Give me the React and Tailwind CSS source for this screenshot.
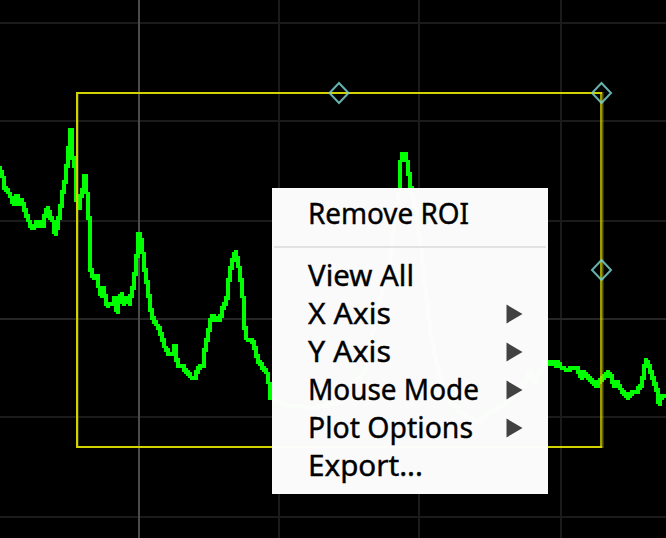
const TRACE =
  '0,168 3,177 5,188 9,193 11,197 13,203 17,196 18,204 22,200 25,210 28,218 31,227 34,227 37,222 39,225 42,221 43,226 46,211 48,208 50,217 53,221 55,233 57,228 60,213 62,198 65,182 68,157 71,129 72,153 75,167 76,197 79,207 81,195 83,190 85,176 87,193 88,212 90,223 90,267 93,277 97,275 99,287 101,295 103,288 107,305 113,303 115,298 117,311 119,302 122,294 124,303 127,297 129,303 132,292 134,282 136,267 139,233 142,243 144,263 147,282 150,302 152,317 155,322 159,328 163,340 165,347 169,354 173,354 175,346 177,360 179,366 182,365 187,372 191,377 195,377 200,365 203,366 205,350 209,330 211,320 213,316 216,320 220,320 223,308 227,298 229,280 232,262 236,252 239,267 242,287 244,307 245,328 247,339 252,340 255,348 258,360 263,368 267,373 269,383 271,398 285,405 312,408 342,402 365,370 375,320 390,260 399,188 400,165 403,153 406,154 408,168 411,187 420,240 430,330 437,365 445,395 460,412 478,422 490,412 510,400 525,382 530,372 535,382 545,361 549,363 553,361 555,365 557,361 561,367 567,370 573,368 577,368 581,377 583,371 587,376 592,381 597,386 600,381 605,376 608,372 611,376 614,386 617,382 622,391 627,397 631,393 637,391 641,385 643,378 646,360 649,366 653,378 657,390 659,403 662,395 666,396';

const POINTS = TRACE.split(' ').map((pair) => pair.split(',').map(Number));

// Rasterise the signal onto a 2px grid, one vertical span per column.
function steppedPath(points) {
  const columns = new Map();
  const mark = (x, y) => {
    const column = Math.round(x / 2) * 2;
    const span = columns.get(column) ?? [y, y];
    columns.set(column, [Math.min(span[0], y), Math.max(span[1], y)]);
  };
  for (let i = 1; i < points.length; i += 1) {
    const [x0, y0] = points[i - 1];
    const [x1, y1] = points[i];
    for (let step = 0; step <= 40; step += 1) {
      const t = step / 40;
      mark(x0 + (x1 - x0) * t, y0 + (y1 - y0) * t);
    }
  }
  return [...columns]
    .map(([x, [low, high]]) => {
      const top = Math.round((low - 2) / 2) * 2;
      const bottom = Math.round((high + 2) / 2) * 2;
      return `M${x - 2} ${top}h4V${bottom}h-4Z`;
    })
    .join('');
}

const TRACE_PATH = steppedPath(POINTS);

const HANDLES = [
  [339, 93],
  [601.5, 93],
  [601.5, 270],
];

const ITEMS = [
  { label: 'View All', width: 106 },
  { label: 'X Axis', width: 83, submenu: true },
  { label: 'Y Axis', width: 83, submenu: true },
  { label: 'Mouse Mode', width: 171, submenu: true },
  { label: 'Plot Options', width: 165, submenu: true },
  { label: 'Export...', width: 115 },
];

function Plot() {
  return (
    <svg className="block" width="666" height="538" viewBox="0 0 666 538" fill="none">
      <g fill="#1b1b1b">
        {[22, 120, 220, 416, 516].map((y) => (
          <rect key={y} x="0" y={y} width="666" height="2" />
        ))}
        {[278, 418, 560].map((x) => (
          <rect key={x} x={x} y="0" width="2" height="538" />
        ))}
        <rect x="0" y="318" width="666" height="2" fill="#262626" />
        <rect x="138" y="0" width="2" height="538" fill="#4b4b4b" />
      </g>
      <path d={TRACE_PATH} fill="#00ff00" shapeRendering="crispEdges" />
      <g fill="#d2d200">
        <rect x="76" y="92" width="526" height="2" />
        <rect x="76" y="446" width="526" height="2" />
        <rect x="76" y="94" width="2" height="352" />
        <rect x="78" y="94" width="1" height="352" fillOpacity="0.25" />
        <rect x="600" y="94" width="2" height="352" fillOpacity="0.75" />
        <rect x="602" y="92" width="1.5" height="356" fillOpacity="0.45" />
      </g>
      {HANDLES.map(([x, y]) => (
        <path
          key={`${x}-${y}`}
          d={`M${x} ${y - 10}L${x + 9.5} ${y}L${x} ${y + 10}L${x - 9.5} ${y}Z`}
          stroke="#78d0cc"
          strokeOpacity="0.85"
          strokeWidth="2"
        />
      ))}
    </svg>
  );
}

function Label({ text, width }) {
  return (
    <svg className="block overflow-visible" width={width} height="38">
      <text
        x="0"
        y="29"
        textLength={width}
        lengthAdjust="spacingAndGlyphs"
        className="fill-black stroke-black font-['Noto_Sans',sans-serif] text-[29px] [stroke-width:0.4px]"
      >
        {text}
      </text>
    </svg>
  );
}

function MenuItem({ label, width, submenu }) {
  return (
    <div className="flex h-[38px] items-center justify-between pl-[36px] pr-[25px]">
      <Label text={label} width={width} />
      {submenu && (
        <svg className="block" width="17" height="20" viewBox="0 0 17 20">
          <path d="M0.5 0.5L16.5 10L0.5 19.5Z" fill="#424242" />
        </svg>
      )}
    </div>
  );
}

export default function App() {
  return (
    <main className="relative h-[538px] w-[666px] overflow-hidden bg-black">
      <Plot />
      <div className="absolute left-[272px] top-[188px] flex h-[306px] w-[276px] flex-col bg-[#fdfdfd]/99 pt-[7px]">
        <MenuItem label="Remove ROI" width={161} />
        <div className="mx-[2px] mb-[11px] mt-[13px] h-[2px] bg-[#e2e2e2]" />
        <div className="-mt-[2px] flex flex-col">
          {ITEMS.map((item) => (
            <MenuItem key={item.label} {...item} />
          ))}
        </div>
      </div>
    </main>
  );
}
